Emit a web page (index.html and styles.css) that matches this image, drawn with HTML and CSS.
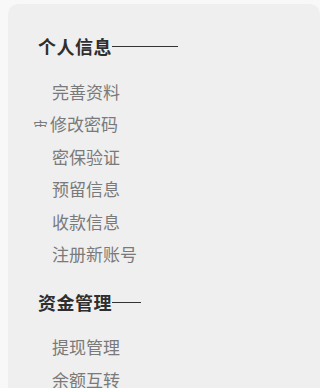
FILE: index.html
```html
<!DOCTYPE html>
<html lang="zh">
<head>
<meta charset="utf-8">
<link rel="stylesheet" href="styles.css">
</head>
<body>
<nav class="panel">
  <section class="group first">
    <h3 class="group-title">个人信息<span class="rule rule-long"></span></h3>
    <ul class="menu">
      <li class="item">完善资料</li>
      <li class="item item-shift"><span class="stray">审</span>修改密码</li>
      <li class="item">密保验证</li>
      <li class="item">预留信息</li>
      <li class="item">收款信息</li>
      <li class="item">注册新账号</li>
    </ul>
  </section>
  <section class="group second">
    <h3 class="group-title">资金管理<span class="rule rule-short"></span></h3>
    <ul class="menu">
      <li class="item">提现管理</li>
      <li class="item item-mark">余额互转<span class="mark"></span></li>
    </ul>
  </section>
</nav>
</body>
</html>
```
FILE: styles.css
```css
html, body {
  margin: 0;
  padding: 0;
  height: 100%;
  overflow: hidden;
}
body {
  background: #f8f8f8;
  font-family: "Noto Sans CJK SC", "Noto Sans", sans-serif;
}
.panel {
  margin: 4px 0 0 8px;
  height: 400px;
  background: #efefef;
  border-radius: 10px 10px 0 0;
  padding-top: 30px;
  box-sizing: border-box;
}
.group-title {
  margin: 0;
  padding-left: 30px;
  display: flex;
  align-items: center;
  height: 24px;
  font-size: 18px;
  font-weight: 700;
  color: #2e2e2e;
  letter-spacing: 0.5px;
}
.rule {
  display: block;
  height: 1px;
  background: #333;
}
.rule-long { width: 66px; }
.rule-short { width: 29px; }
.menu {
  list-style: none;
  margin: 0;
  padding: 0;
}
.first .menu { margin-top: 18px; }
.second { margin-top: 20px; }
.second .menu { margin-top: 17px; }
.item {
  padding-left: 44px;
  height: 32.4px;
  line-height: 32.4px;
  font-size: 17px;
  color: #7a7a7a;
  white-space: nowrap;
}
.item-shift { padding-left: 42px; }
.stray {
  display: inline-block;
  width: 15px;
  height: 9px;
  margin-left: -17px;
  margin-right: 2px;
  overflow: hidden;
  line-height: 17px;
  font-size: 15px;
  vertical-align: 4px;
  color: #7a7a7a;
}
.item-mark { position: relative; }
.mark {
  position: absolute;
  left: 66px;
  top: 27px;
  width: 7px;
  height: 5px;
  border-radius: 3px 3px 0 0;
  background: #3d86d6;
}
```
